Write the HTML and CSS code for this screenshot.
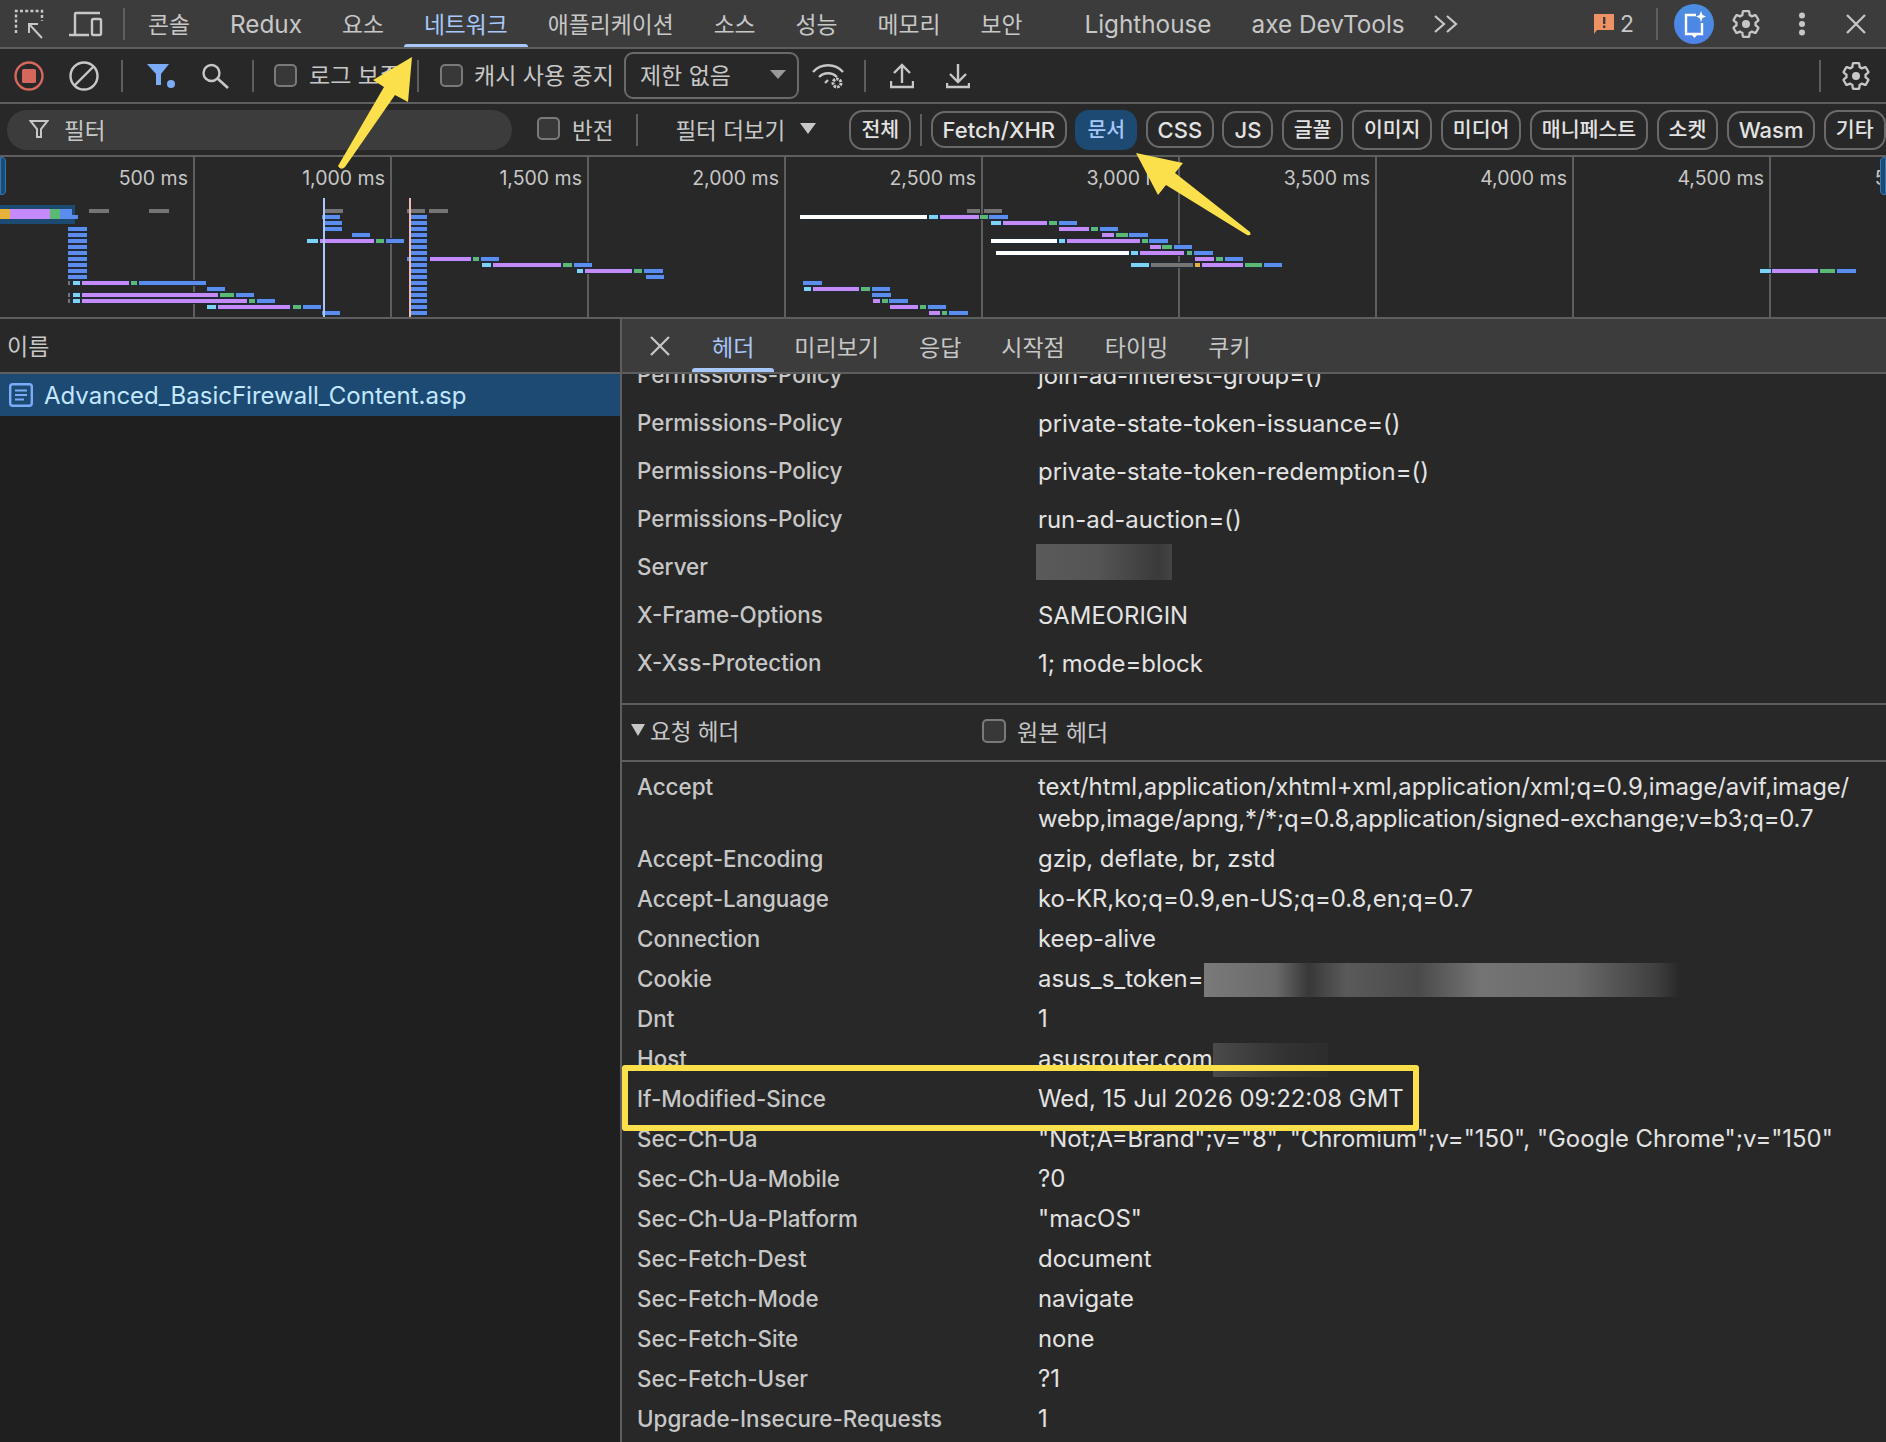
FILE: index.html
```html
<html>
    <head>
        <meta charset="utf-8">
        <title>Network</title>
        <link rel="stylesheet" href="styles.css">
    </head>
    <body>
        <svg class="defs" width="0" height="0">
            <symbol id="gear" viewBox="0 0 24 24">
                <path fill="none" stroke="currentColor" stroke-width="1.7" d="M19.14 12.94c.04-.3.06-.61.06-.94 0-.32-.02-.64-.07-.94l2.03-1.58c.18-.14.23-.41.12-.61l-1.92-3.32c-.12-.22-.37-.29-.59-.22l-2.39.96c-.5-.38-1.03-.7-1.62-.94l-.36-2.54c-.04-.24-.24-.41-.48-.41h-3.84c-.24 0-.43.17-.47.41l-.36 2.54c-.59.24-1.13.57-1.62.94l-2.39-.96c-.22-.08-.47 0-.59.22L2.74 8.87c-.12.21-.08.47.12.61l2.03 1.58c-.05.3-.09.63-.09.94s.02.64.07.94l-2.03 1.58c-.18.14-.23.41-.12.61l1.92 3.32c.12.22.37.29.59.22l2.39-.96c.5.38 1.03.7 1.62.94l.36 2.54c.05.24.24.41.48.41h3.84c.24 0 .44-.17.47-.41l.36-2.54c.59-.24 1.13-.56 1.62-.94l2.39.96c.22.08.47 0 .59-.22l1.92-3.32c.12-.22.07-.47-.12-.61l-2.01-1.58z"/>
                <circle cx="12" cy="12" r="3" fill="currentColor"/>
            </symbol>
        </svg>

        <div class="topbar">
            <svg class="ic ic-inspect" width="30" height="30" viewBox="0 0 30 30"><path fill="none" stroke="currentColor" stroke-width="2.4" stroke-dasharray="3 2.2" d="M2 24V2H28V12"/><path fill="none" stroke="currentColor" stroke-width="2" d="M15 15L28 29M15 24V15H24"/></svg>
            <svg class="ic ic-device" width="34" height="26" viewBox="0 0 34 26"><path fill="none" stroke="currentColor" stroke-width="2.4" d="M6 23V3a1 1 0 0 1 1-1H31M0 24H20"/><rect x="23" y="8" width="9" height="16" rx="1.5" fill="none" stroke="currentColor" stroke-width="2.4"/></svg>
            <div class="vsep"></div>
            <div class="tabs">
                <div class="tab">콘솔</div>
                <div class="tab latin">Redux</div>
                <div class="tab">요소</div>
                <div class="tab active">네트워크</div>
                <div class="tab">애플리케이션</div>
                <div class="tab">소스</div>
                <div class="tab">성능</div>
                <div class="tab">메모리</div>
                <div class="tab">보안</div>
                <div class="tab latin tab_far">Lighthouse</div>
                <div class="tab latin">axe DevTools</div>
            </div>
            <svg class="ic ic-more" width="26" height="20" viewBox="0 0 26 20"><path fill="none" stroke="currentColor" stroke-width="2.2" d="M2 2L11 10L2 18M14 2L23 10L14 18"/></svg>
            <div class="top_right">
                <svg class="issue_ic" width="22" height="20" viewBox="0 0 22 20"><path fill="#ee9164" d="M1 0H21V16H4L1 20Z"/><path fill="#3c3c3c" d="M10 3H12.4V10H10ZM10 11.6H12.4V14H10Z"/></svg>
                <span class="issue_num">2</span>
                <div class="vsep sep_issue"></div>
                <svg class="ai_ic" width="40" height="40" viewBox="0 0 40 40"><defs><linearGradient id="aigrad" x1="0" y1="0" x2="0" y2="1"><stop offset="0" stop-color="#4a8fe0"/><stop offset="1" stop-color="#4f82e8"/></linearGradient></defs><circle cx="20" cy="20" r="20" fill="url(#aigrad)"/><path fill="none" stroke="#fff" stroke-width="2.4" d="M22 11H12V30H28V19"/><path fill="#fff" d="M17 30H24L20.500 34Z"/><path fill="#fff" d="M27 7L28.500 11L32 12.500L28.500 14L27 18L25.500 14L22 12.500L25.500 11Z"/></svg>
                <svg class="ic ic-gear" width="32" height="32"><use href="#gear"/></svg>
                <svg class="ic ic-dots" width="8" height="24" viewBox="0 0 8 24"><circle cx="4" cy="3.500" r="3" fill="currentColor"/><circle cx="4" cy="12" r="3" fill="currentColor"/><circle cx="4" cy="20.500" r="3" fill="currentColor"/></svg>
                <svg class="ic ic-close" width="20" height="20" viewBox="0 0 20 20"><path stroke="currentColor" stroke-width="2.2" d="M1 1L19 19M19 1L1 19"/></svg>
            </div>
        </div>

        <div class="toolbar">
            <svg class="ic ic-record" width="30" height="30" viewBox="0 0 30 30"><circle cx="15" cy="15" r="13.500" fill="none" stroke="#d6675c" stroke-width="2.4"/><rect x="8" y="8" width="14" height="14" rx="1.500" fill="#d6675c"/></svg>
            <svg class="ic ic-block" width="30" height="30" viewBox="0 0 30 30"><circle cx="15" cy="15" r="13.500" fill="none" stroke="currentColor" stroke-width="2.4"/><path stroke="currentColor" stroke-width="2.4" d="M5.500 24.500L24.500 5.500"/></svg>
            <div class="vsep sep_tool"></div>
            <svg class="ic ic-funnel" width="30" height="26" viewBox="0 0 30 26"><path fill="#7cacf8" d="M0 1H22L14 11V22H9V11Z"/><circle cx="24" cy="21" r="4" fill="#7cacf8"/></svg>
            <svg class="ic ic-search" width="30" height="26" viewBox="0 0 30 26"><circle cx="10.500" cy="10" r="8" fill="none" stroke="currentColor" stroke-width="2.400"/><path stroke="currentColor" stroke-width="2.600" d="M16.500 15.500L27 25"/></svg>
            <div class="vsep sep_tool sep_search"></div>
            <label class="check check_log"><span class="box"></span>로그 보존</label>
            <div class="vsep sep_tool sep_log"></div>
            <label class="check check_cache"><span class="box"></span>캐시 사용 중지</label>
            <div class="select">제한 없음<span class="caret"></span></div>
            <svg class="ic ic-wifi" width="34" height="28" viewBox="0 0 34 28"><path fill="none" stroke="currentColor" stroke-width="2.300" d="M2 10C10 1 24 1 32 10M8 15C13 10 21 10 26 15M14 21L17 18"/><circle cx="26" cy="21" r="4" fill="none" stroke="currentColor" stroke-width="3" stroke-dasharray="2.500 1"/></svg>
            <div class="vsep sep_tool sep_wifi"></div>
            <svg class="ic ic-upload" width="24" height="26" viewBox="0 0 24 26"><path fill="none" stroke="currentColor" stroke-width="2.400" d="M12 20V3M4 10L12 2L20 10M1 18V24H23V18"/></svg>
            <svg class="ic ic-download" width="24" height="26" viewBox="0 0 24 26"><path fill="none" stroke="currentColor" stroke-width="2.400" d="M12 1V18M4 11L12 19L20 11M1 20V24H23V20"/></svg>
            <div class="vsep sep_tool sep_end"></div>
            <svg class="ic ic-gear_small" width="32" height="32"><use href="#gear"/></svg>
        </div>

        <div class="filterbar">
            <div class="filter_input">
                <svg class="ic" width="20" height="20" viewBox="0 0 20 20"><path fill="none" stroke="currentColor" stroke-width="2" d="M1.500 2H18.500L12 10V18H8V10Z"/></svg>
                <span>필터</span>
            </div>
            <label class="check check_invert"><span class="box"></span>반전</label>
            <div class="vsep sep_filter"></div>
            <div class="more_filters">필터 더보기<span class="caret caret_more"></span></div>
            <div class="chip">전체</div>
            <div class="vsep sep_chip"></div>
            <div class="chip chip_fetch latin">Fetch/XHR</div>
            <div class="chip selected">문서</div>
            <div class="chip latin">CSS</div>
            <div class="chip latin">JS</div>
            <div class="chip">글꼴</div>
            <div class="chip">이미지</div>
            <div class="chip">미디어</div>
            <div class="chip">매니페스트</div>
            <div class="chip">소켓</div>
            <div class="chip latin">Wasm</div>
            <div class="chip">기타</div>
        </div>

        <div class="overview">
            <div class="tick tick_first">500 ms</div>
            <div class="tick">1,000 ms</div>
            <div class="tick">1,500 ms</div>
            <div class="tick">2,000 ms</div>
            <div class="tick">2,500 ms</div>
            <div class="tick">3,000 ms</div>
            <div class="tick">3,500 ms</div>
            <div class="tick">4,000 ms</div>
            <div class="tick">4,500 ms</div>
            <div class="tick">5,000 ms</div>
            <div class="handle handle_left"></div>
            <div class="handle handle_right"></div>
            <svg class="bars" width="1886" height="160" viewBox="0 157 1886 160">
                <rect x="0" y="205" width="75" height="19" fill="#1c4a72"/>
                <path class="edge" d="M68 229H87M68 235H87M68 241H87M68 247H87M68 253H87M68 259H87M68 265H87M68 271H87M68 277H87M68 283H206M207 289H225M68 295H254M68 301H275M207 307H321M322 313H340M322 217H340M324 223H342M324 229H342M352 235H370M307 241H404M409 217H427M409 223H427M409 229H427M409 235H427M409 241H427M409 247H427M409 253H427M407 259H499M409 265H427M409 271H427M409 277H427M409 283H427M409 289H427M409 295H427M409 301H427M409 307H427M409 313H427M482 265H592M577 271H663M646 277H664M800 217H1008M991 223H1077M1059 229H1118M1102 235H1148M991 241H1168M1150 247H1192M996 253H1213M1195 259H1243M1131 265H1282M803 283H822M804 289H890M872 295H891M873 301H908M890 307H946M929 313H968M1760 271H1856"/>
                <path class="gray" d="M89 211H109M149 211H169M324 211H343M407 211H425M429 211H448M967 211H980M984 211H1002M68 283H70M68 295H70M68 301H70M1151 265H1193"/>
                <path class="blue" d="M72 217H78M68 229H87M68 235H87M68 241H87M68 247H87M68 253H87M68 259H87M68 265H87M68 271H87M68 277H87M139 283H206M207 289H225M236 295H254M257 301H275M303 307H321M322 313H340M322 217H340M324 223H342M324 229H342M352 235H370M386 241H404M409 217H427M409 223H427M409 229H427M409 235H427M409 241H427M409 247H427M409 253H427M407 259H427M409 265H427M409 271H427M409 277H427M409 283H427M409 289H427M409 295H427M409 301H427M409 307H427M409 313H427M481 259H499M574 265H592M644 271H663M646 277H664M989 217H1008M1059 223H1077M1100 229H1118M1129 235H1148M1149 241H1168M1174 247H1192M1194 253H1213M1225 259H1243M1264 265H1282M803 283H822M872 289H890M872 295H891M889 301H908M928 307H946M949 313H968M1837 271H1856"/>
                <path class="purple" d="M82 283H129M82 295H218M82 301H247M218 307H290M320 241H374M430 259H471M493 265H561M585 271H632M940 217H979M1003 223H1047M1059 229H1089M1102 235H1114M1067 241H1140M1150 247H1161M1140 253H1184M1195 259H1214M1202 265H1243M813 289H859M873 301H880M890 307H918M929 313H940M1772 271H1818"/>
                <path class="green" d="M131 283H137M220 295H234M249 301H255M293 307H301M376 241H384M473 259H479M563 265H572M634 271H642M980 217H988M1049 223H1057M1091 229H1098M1116 235H1128M1142 241H1148M1162 247H1172M1187 253H1192M1216 259H1223M1245 265H1262M861 289H870M882 301H888M920 307H926M942 313H947M1820 271H1835"/>
                <path class="cyan" d="M73 283H80M73 295H80M73 301H80M207 307H216M307 241H318M482 265H491M577 271H583M929 217H938M991 223H1001M1059 241H1065M1131 253H1138M1131 265H1149M804 289H811M1760 271H1771"/>
                <path class="white" d="M800 217H927M991 241H1057M996 253H1129"/>
                <path class="amber" d="M1195 265H1200"/>
                <rect x="0" y="209" width="10" height="10" fill="#e5b33b"/>
                <rect x="10" y="209" width="40" height="10" fill="#c58af9"/>
                <rect x="50" y="209" width="10" height="10" fill="#5bb974"/>
                <rect x="60" y="209" width="12" height="10" fill="#5b8def"/>
                <rect x="323" y="198" width="2" height="120" fill="#a8c7fa"/>
                <rect x="409" y="198" width="2" height="120" fill="#f2b8b5"/>
            </svg>
        </div>

        <div class="main">
            <div class="list">
                <div class="list_head">이름</div>
                <div class="list_row">
                    <svg class="doc_ic" width="24" height="24" viewBox="0 0 24 24"><rect x="1.200" y="1.200" width="21.600" height="21.600" rx="2.500" fill="none" stroke="#7cacf8" stroke-width="2.400"/><path stroke="#7cacf8" stroke-width="2.200" d="M6 7.500H18M6 12H18M6 16.500H15"/></svg>
                    Advanced_BasicFirewall_Content.asp
                </div>
            </div>
            <div class="detail">
                <div class="detail_tabs">
                    <svg class="ic detail_close" width="20" height="20" viewBox="0 0 20 20"><path stroke="currentColor" stroke-width="2.200" d="M1 1L19 19M19 1L1 19"/></svg>
                    <div class="dtab active">헤더</div>
                    <div class="dtab">미리보기</div>
                    <div class="dtab">응답</div>
                    <div class="dtab">시작점</div>
                    <div class="dtab">타이밍</div>
                    <div class="dtab">쿠키</div>
                </div>
                <div class="detail_body">
                    <div class="rows rows_resp">
                        <div class="name">Permissions-Policy</div><div class="val">join-ad-interest-group=()</div>
                        <div class="name">Permissions-Policy</div><div class="val">private-state-token-issuance=()</div>
                        <div class="name">Permissions-Policy</div><div class="val">private-state-token-redemption=()</div>
                        <div class="name">Permissions-Policy</div><div class="val">run-ad-auction=()</div>
                        <div class="name">Server</div><div class="val"><span class="blur blur_server"></span></div>
                        <div class="name">X-Frame-Options</div><div class="val">SAMEORIGIN</div>
                        <div class="name">X-Xss-Protection</div><div class="val">1; mode=block</div>
                    </div>
                    <div class="section_head">
                        <div class="section_title"><span class="tri"></span>요청 헤더</div>
                        <label class="check check_raw"><span class="box"></span>원본 헤더</label>
                    </div>
                    <div class="rows rows_req">
                        <div class="name">Accept</div><div class="val val_long">text/html,application/xhtml+xml,application/xml;q=0.9,image/avif,image/<br><span class="val_tight">webp,image/apng,*/*;q=0.8,application/signed-exchange;v=b3;q=0.7</span></div>
                        <div class="name">Accept-Encoding</div><div class="val">gzip, deflate, br, zstd</div>
                        <div class="name">Accept-Language</div><div class="val">ko-KR,ko;q=0.9,en-US;q=0.8,en;q=0.7</div>
                        <div class="name">Connection</div><div class="val">keep-alive</div>
                        <div class="name">Cookie</div><div class="val">asus_s_token=<span class="blur blur_cookie"></span></div>
                        <div class="name">Dnt</div><div class="val">1</div>
                        <div class="name">Host</div><div class="val">asusrouter.com<span class="blur blur_host"></span></div>
                        <div class="name">If-Modified-Since</div><div class="val">Wed, 15 Jul 2026 09:22:08 GMT</div>
                        <div class="name">Sec-Ch-Ua</div><div class="val">"Not;A=Brand";v="8", "Chromium";v="150", "Google Chrome";v="150"</div>
                        <div class="name">Sec-Ch-Ua-Mobile</div><div class="val">?0</div>
                        <div class="name">Sec-Ch-Ua-Platform</div><div class="val">"macOS"</div>
                        <div class="name">Sec-Fetch-Dest</div><div class="val">document</div>
                        <div class="name">Sec-Fetch-Mode</div><div class="val">navigate</div>
                        <div class="name">Sec-Fetch-Site</div><div class="val">none</div>
                        <div class="name">Sec-Fetch-User</div><div class="val">?1</div>
                        <div class="name">Upgrade-Insecure-Requests</div><div class="val">1</div>
                    </div>
                </div>
            </div>
        </div>

        <!-- annotations drawn on top of the screenshot -->
        <div class="highlight"></div>
        <svg class="arrows" width="1886" height="260" viewBox="0 0 1886 260">
            <path d="M412 57L408 102L395 95L345 167Q341 171 338 166L384 87L373 80Z"/>
            <path d="M1136 153L1183 163L1175 173L1250 232Q1252 236 1247 235L1166 185L1158 195Z"/>
        </svg>
    </body>
</html>
```
FILE: styles.css
```css
html, body{
    margin: 0;
    padding: 0;
}
body{
    position: relative;
    width: 1886px;
    height: 1442px;
    overflow: hidden;
    background: #1f1f1f;
    color: #c7c7c7;
    font-family: Inter, "Noto Sans CJK KR", sans-serif;
    font-size: 23px;
}
.defs{
    position: absolute;
}
.ic{
    flex: none;
    color: #c7c7c7;
}
.vsep{
    flex: none;
    width: 2px;
    height: 32px;
    background: #5e5e5e;
}

/* top tab strip */
.topbar{
    display: flex;
    align-items: center;
    height: 47px;
    background: #3c3c3c;
    border-bottom: 2px solid #5e5e5e;
}
.ic-inspect{
    margin-left: 14px;
}
.ic-device{
    margin-left: 25px;
}
.topbar > .vsep{
    margin-left: 20px;
}
.tabs{
    display: flex;
    height: 47px;
    margin-left: 3px;
}
.tab{
    position: relative;
    padding: 0 20px;
    line-height: 49px;
    font-size: 22.800px;
}
.tab.latin{
    font-size: 24.300px;
}
.tab_far{
    margin-left: 22px;
}
.tab.active{
    color: #a8c7fa;
}
.tab.active::after{
    content: '';
    position: absolute;
    left: 0;
    right: 0;
    bottom: 0;
    height: 3px;
    background: #a8c7fa;
    border-radius: 3px 3px 0 0;
}
.ic-more{
    margin-left: 8px;
}
.top_right{
    display: flex;
    align-items: center;
    margin-left: auto;
    height: 47px;
}
.issue_num{
    margin-left: 5px;
    font-size: 23px;
}
.topbar .sep_issue{
    margin-left: 22px;
}
.ai_ic{
    margin-left: 16px;
}
.ic-gear{
    margin-left: 16px;
}
.ic-dots{
    margin-left: 36px;
}
.ic-close{
    margin-left: 40px;
    margin-right: 20px;
}

/* toolbar */
.toolbar{
    display: flex;
    align-items: center;
    height: 53px;
    background: #282828;
    border-bottom: 2px solid #5e5e5e;
}
.ic-record{
    margin-left: 14px;
}
.ic-block{
    margin-left: 25px;
}
.sep_tool{
    margin-left: 22px;
}
.ic-funnel{
    margin-left: 24px;
}
.ic-search{
    margin-left: 24px;
}
.sep_search{
    margin-left: 21px;
}
.check{
    display: flex;
    align-items: center;
    flex: none;
}
.toolbar .check, .select{
    padding-bottom: 3px;
}
.toolbar .check .box{
    margin-top: 3px;
}
.box{
    flex: none;
    box-sizing: border-box;
    width: 23px;
    height: 23px;
    margin-right: 12px;
    background: #383838;
    border: 2px solid #7a7a7a;
    border-radius: 5px;
}
.check_log{
    margin-left: 20px;
    width: 143px;
    white-space: nowrap;
}
.sep_log{
    margin-left: 0;
}
.check_cache{
    margin-left: 21px;
}
.check_cache .box{
    margin-right: 11px;
}
.select{
    display: flex;
    align-items: center;
    box-sizing: border-box;
    flex: none;
    width: 175px;
    height: 47px;
    margin-left: 10px;
    padding-left: 14px;
    border: 2px solid #6a6a6a;
    border-radius: 9px;
}
.caret{
    width: 0;
    height: 0;
    margin-left: auto;
    margin-right: 11px;
    border-left: 8px solid transparent;
    border-right: 8px solid transparent;
    border-top: 9px solid #9a9a9a;
}
.ic-wifi{
    margin-left: 12px;
}
.sep_wifi{
    margin-left: 19px;
}
.ic-upload{
    margin-left: 24px;
}
.ic-download{
    margin-left: 32px;
}
.sep_end{
    margin-left: auto;
}
.ic-gear_small{
    margin-left: 19px;
    margin-right: 14px;
}

/* filter row */
.filterbar{
    display: flex;
    align-items: center;
    height: 51px;
    background: #282828;
    border-bottom: 2px solid #5e5e5e;
    white-space: nowrap;
}
.filter_input{
    display: flex;
    align-items: center;
    flex: none;
    gap: 15px;
    box-sizing: border-box;
    width: 505px;
    height: 40px;
    margin-left: 7px;
    padding-left: 22px;
    padding-bottom: 2px;
    background: #3c3c3c;
    border-radius: 20px;
    font-size: 22.500px;
}
.check_invert{
    margin-left: 25px;
    padding-bottom: 2px;
    font-size: 22.500px;
}
.sep_filter{
    margin-left: 23px;
}
.more_filters{
    display: flex;
    align-items: center;
    flex: none;
    margin-left: 37px;
    width: 174px;
    padding-bottom: 2px;
    font-size: 22.500px;
}
.caret_more{
    margin-left: 15px;
    margin-right: 0;
    border-top-color: #c7c7c7;
    border-top-width: 11px;
}
.chip{
    box-sizing: border-box;
    flex: none;
    height: 40px;
    margin-right: 8.400px;
    padding: 0 10px;
    line-height: 35px;
    font-size: 20.500px;
    font-weight: 500;
    color: #e3e3e3;
    border: 2px solid #6a6a6a;
    border-radius: 14px;
}
.chip.latin{
    height: 37px;
    padding: 0 10px;
    line-height: 34px;
    font-size: 22px;
}
.chip.selected{
    background: #1c4a72;
    border-color: #1c4a72;
    color: #a8c7fa;
}
.sep_chip{
    margin-right: 9px;
    height: 32px;
}

/* timeline overview */
.overview{
    position: relative;
    display: flex;
    height: 160px;
    background: #282828;
    border-bottom: 2px solid #5e5e5e;
    overflow: hidden;
}
.tick{
    flex: none;
    box-sizing: border-box;
    width: 197px;
    padding: 9px 5px 0 0;
    text-align: right;
    font-size: 19.500px;
    line-height: 24px;
    border-right: 2px solid #5e5e5e;
}
.tick_first{
    width: 195px;
}
.tick:last-of-type{
    border-right: none;
}
.bars{
    position: absolute;
    left: 0;
    top: 0;
}
.bars path{
    fill: none;
    stroke-width: 4;
}
.bars .edge{
    stroke: #222a38;
    stroke-width: 6;
}
.bars .gray{
    stroke: #757575;
}
.bars .blue{
    stroke: #5b8def;
}
.bars .purple{
    stroke: #c58af9;
}
.bars .green{
    stroke: #5bb974;
}
.bars .cyan{
    stroke: #7cd4f5;
}
.bars .white{
    stroke: #ffffff;
}
.bars .amber{
    stroke: #e5b33b;
}
.handle{
    position: absolute;
    top: 0;
    width: 6px;
    height: 38px;
    background: #1c4a72;
    border: 1px solid #2f77b5;
    box-sizing: border-box;
}
.handle_left{
    left: 0;
    border-radius: 0 4px 4px 0;
}
.handle_right{
    right: 0;
    border-radius: 4px 0 0 4px;
}

/* lower panels */
.main{
    display: flex;
    height: 1123px;
}
.list{
    flex: none;
    width: 620px;
    background: #1f1f1f;
}
.list_head{
    height: 53px;
    padding-left: 7px;
    line-height: 56px;
    background: #282828;
    border-bottom: 2px solid #5e5e5e;
}
.list_row{
    display: flex;
    align-items: center;
    gap: 11px;
    height: 42px;
    padding-left: 9px;
    background: #1c4a72;
    color: #c2e7ff;
    font-size: 24px;
}
.doc_ic{
    flex: none;
}
.detail{
    flex: 1;
    min-width: 0;
    border-left: 2px solid #5e5e5e;
    background: #282828;
}
.detail_tabs{
    display: flex;
    align-items: center;
    height: 53px;
    background: #3c3c3c;
    border-bottom: 2px solid #5e5e5e;
}
.detail_close{
    margin-left: 28px;
    margin-right: 22px;
}
.dtab{
    position: relative;
    height: 53px;
    padding: 0 20px;
    line-height: 58px;
    font-size: 23px;
}
.dtab.active{
    color: #a8c7fa;
}
.dtab.active::after{
    content: '';
    position: absolute;
    left: 0;
    right: 0;
    bottom: 0;
    height: 4px;
    background: #a8c7fa;
    border-radius: 3px 3px 0 0;
}
.detail_body{
    height: 1068px;
    overflow: hidden;
}
.rows{
    display: grid;
    grid-template-columns: 401px 1fr;
    padding-left: 15px;
}
.rows_resp{
    margin-top: -23px;
    padding-bottom: 16px;
    grid-auto-rows: 48px;
    line-height: 48px;
    border-bottom: 2px solid #5e5e5e;
}
.rows_resp .val{
    padding-top: 1px;
}
.rows_req{
    padding-top: 5px;
    line-height: 32px;
}
.rows_req .name, .rows_req .val{
    padding: 4px 0;
}
.name{
    color: #c7c7c7;
    font-size: 22.400px;
    font-weight: 500;
    white-space: nowrap;
}
.val{
    color: #e3e3e3;
    font-size: 23.900px;
    white-space: nowrap;
}
.val_long{
    letter-spacing: -0.060px;
}
.val_tight{
    letter-spacing: -0.200px;
}
.blur{
    display: inline-block;
    vertical-align: middle;
}
.blur_server{
    width: 136px;
    height: 36px;
    margin-left: -2px;
    background: linear-gradient(90deg, #5a5a5a, #555 45%, #3a3a3a 90%, #444);
}
.blur_cookie{
    width: 476px;
    height: 34px;
    margin: -4px 0;
    background: linear-gradient(90deg, #7a7a7a, #6a6a6a 15%, #383838 22%, #5a5a5a 30%, #4a4a4a 45%, #747474 58%, #6a6a6a 78%, #3f3f3f 95%, #282828);
}
.blur_host{
    width: 115px;
    height: 34px;
    margin: -4px 0;
    background: linear-gradient(90deg, #4a4a4a, #333 60%, #2c2c2c);
}
.section_head{
    display: flex;
    align-items: center;
    height: 55px;
    padding-left: 9px;
    border-bottom: 2px solid #5e5e5e;
}
.section_title{
    display: flex;
    align-items: center;
    width: 351px;
    padding-bottom: 6px;
    font-size: 22.500px;
}
.tri{
    width: 0;
    height: 0;
    margin-right: 5px;
    border-left: 7px solid transparent;
    border-right: 7px solid transparent;
    border-top: 12px solid #c7c7c7;
}
.check_raw{
    padding-bottom: 3px;
    font-size: 23px;
}
.check_raw .box{
    width: 24px;
    height: 24px;
    margin-right: 11px;
}

/* yellow markup */
.highlight{
    position: absolute;
    left: 622px;
    top: 1065px;
    width: 797px;
    height: 66px;
    box-sizing: border-box;
    border: 6px solid #fbe04b;
    border-radius: 3px;
}
.arrows{
    position: absolute;
    left: 0;
    top: 0;
}
.arrows path{
    fill: #fbe04b;
}
```
